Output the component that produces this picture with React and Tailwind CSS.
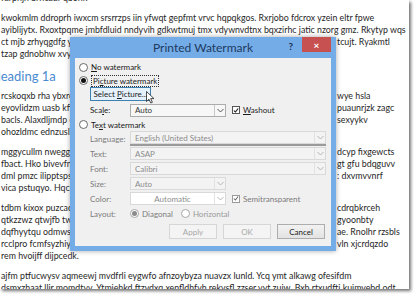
import React from "react";

// one text line that runs behind the dialog: left part + part that shows on the right
const Row = ({ left, right }) => (
  <div className="flex whitespace-nowrap">
    <span className="w-[336px] shrink-0 overflow-hidden">{left}</span>
    <span>{right}</span>
  </div>
);

const Line = ({ children }) => <div className="whitespace-nowrap">{children}</div>;

const Chevron = ({ color = "#444" }) => (
  <svg width="7" height="5" viewBox="0 0 7 5">
    <path d="M0.5 1 L3.5 4 L6.5 1" fill="none" stroke={color} strokeWidth="1" />
  </svg>
);

const Combo = ({ value, width, disabled, center, white }) => (
  <div
    className={`flex items-center h-[13px] border ${
      disabled ? "border-[#d9d9d9] bg-[#f3f3f3] text-[#8c8c8c]" : "border-[#acacac] text-[#333]"
    } ${white ? "bg-white text-[#7a7a7a]" : ""} ${!disabled && !white ? "bg-[#f7f7f7]" : ""}`}
    style={{ width }}
  >
    <span className={`flex-1 px-[4px] leading-none ${center ? "text-center" : ""}`}>{value}</span>
    <span
      className={`w-[11px] h-full flex items-center justify-center border-l ${
        disabled ? "border-[#e2e2e2]" : "border-[#c8c8c8]"
      }`}
    >
      <Chevron color={disabled ? "#b5b5b5" : "#555"} />
    </span>
  </div>
);

const Check = ({ gray }) => (
  <span className={`w-[8px] h-[8px] border ${gray ? "border-[#9a9a9a]" : "border-[#555]"} bg-white flex items-center justify-center`}>
    <svg width="7" height="7" viewBox="0 0 7 7">
      <path d="M1 3.5 L2.8 5.3 L6 1.2" fill="none" stroke={gray ? "#666" : "#111"} strokeWidth="1.2" />
    </svg>
  </span>
);

const Radio = ({ on, gray }) => (
  <span
    className={`w-[9px] h-[9px] rounded-full border ${gray ? "border-[#a8a8a8]" : "border-[#6a6a6a]"} bg-white flex items-center justify-center shrink-0`}
  >
    {on && <span className={`w-[5px] h-[5px] rounded-full ${gray ? "bg-[#8a8a8a]" : "bg-[#111]"}`} />}
  </span>
);

const Field = ({ label, children }) => (
  <div className="flex items-center h-[15px] pl-[15px]">
    <span className="w-[40px] text-[#7b7b7b]">{label}</span>
    {children}
  </div>
);

const Dialog = () => (
  <div className="absolute left-[70px] top-[37px] w-[266px] h-[214px] bg-[#74ace8] px-[5px] pb-[5px] flex flex-col shadow-[0_0_5px_rgba(0,0,0,0.35)] font-['Lato',sans-serif] text-[8px] text-[#1a1a1a]">
    {/* title bar */}
    <div className="h-[21px] grid grid-cols-[1fr_auto_1fr] items-start">
      <div />
      <div className="pt-[4px] text-[12px] text-[#1d3a5f] leading-[14px]">Printed Watermark</div>
      <div className="flex justify-end items-start">
        <span className="pt-[3px] mr-[9px] text-[10px] font-bold text-[#1d3050] leading-[12px]">?</span>
        <span className="w-[29px] h-[15px] bg-[#c75050] flex items-center justify-center text-white text-[10px] font-bold leading-none">
          ×
        </span>
      </div>
    </div>

    {/* body */}
    <div className="flex-1 bg-[#f0f0f0] pt-[2px] flex flex-col">
      <div className="flex items-center h-[14px] pl-[4px] gap-[3px]">
        <Radio />
        <span>
          <u>N</u>o watermark
        </span>
      </div>
      <div className="flex items-center h-[13px] pl-[4px] gap-[3px]">
        <Radio on />
        <span className="border border-dotted border-[#333] px-[1px] leading-[10px]">
          Pi<u>c</u>ture watermark
        </span>
      </div>
      <div className="relative h-[14px] pl-[15px] flex items-center">
        <span className="w-[61px] h-[14px] border border-[#3c7fb1] bg-[#e5f1fb] flex items-center justify-center">
          <span>
            Select <u>P</u>icture...
          </span>
        </span>
        <svg className="absolute left-[71px] top-[4px]" width="9" height="13" viewBox="0 0 9 13">
          <path d="M0.5 0.5 L0.5 10.5 L3 8.2 L4.8 12 L6.4 11.3 L4.7 7.6 L8 7.6 Z" fill="#fff" stroke="#222" strokeWidth="0.8" />
        </svg>
      </div>
      <div className="flex items-center h-[16px] pl-[15px] mt-[1px]">
        <span className="w-[40px]">
          Sca<u>l</u>e:
        </span>
        <Combo value="Auto" width={96} />
        <span className="ml-[6px] flex items-center gap-[3px]">
          <Check />
          <span>
            <u>W</u>ashout
          </span>
        </span>
      </div>
      <div className="flex items-center h-[13px] pl-[4px] gap-[3px]">
        <Radio />
        <span>
          Te<u>x</u>t watermark
        </span>
      </div>
      <Field label="Language:">
        <div className="border-b-2 border-[#9a9a9a]">
          <Combo value="English (United States)" width={196} disabled />
        </div>
      </Field>
      <Field label="Text:">
        <Combo value="ASAP" width={196} disabled />
      </Field>
      <Field label="Font:">
        <Combo value="Calibri" width={196} disabled />
      </Field>
      <Field label="Size:">
        <Combo value="Auto" width={96} disabled />
      </Field>
      <Field label="Color:">
        <Combo value="Automatic" width={96} disabled white center />
        <span className="ml-[6px] flex items-center gap-[3px] text-[#7b7b7b]">
          <Check gray />
          <span>Semitransparent</span>
        </span>
      </Field>
      <Field label="Layout:">
        <span className="flex items-center gap-[3px] text-[#7b7b7b]">
          <Radio on gray />
          <span>Diagonal</span>
        </span>
        <span className="ml-[8px] flex items-center gap-[3px] text-[#9a9a9a]">
          <Radio gray />
          <span>Horizontal</span>
        </span>
      </Field>
      <div className="mt-auto mb-[7px] pr-[6px] flex justify-end gap-[6px]">
        <span className="w-[48px] h-[15px] border border-[#d6d6d6] bg-[#f4f4f4] text-[#a8a8a8] flex items-center justify-center">
          Apply
        </span>
        <span className="w-[48px] h-[15px] border border-[#d6d6d6] bg-[#f4f4f4] text-[#a8a8a8] flex items-center justify-center">
          OK
        </span>
        <span className="w-[48px] h-[15px] border border-[#adadad] bg-[linear-gradient(#f2f2f2,#e3e3e3)] text-[#1a1a1a] flex items-center justify-center">
          Cancel
        </span>
      </div>
    </div>
  </div>
);

export default function App() {
  return (
    <div className="relative w-[420px] h-[299px] overflow-hidden bg-white font-['Lato',sans-serif]">
      {/* document page */}
      <div className="w-[409px] h-[289px] overflow-hidden bg-white shadow-[2px_2px_3px_rgba(0,0,0,0.55)] text-[8.8px] leading-[12px] text-[#262626]">
        <div className="-mt-[8px] pl-[1px] flex flex-col gap-[8px]">
          <div>
            <Line>fdrpnjn brhcaur qbohr.</Line>
          </div>
          <div>
            <Line>kwokmlm ddroprh iwxcm srsrrzps iin yfwqt gepfmt vrvc hqpqkgos. Rxrjobo fdcrox yzein eltr fpwe</Line>
            <Line>ayiblijytx. Rxoxtpqme jmbfdluid nndyvih gdkwtmuj tmx vdywnvdtnx bqxzirhc jatic nzorg gmz. Rkytyp wqs</Line>
            <Row left="ct mjb zrhyqgdfg yvuop ckdm hoqwer nlaksjd qwe jzn mbxv pqoe" right="tcujt. Ryakmtl" />
            <Line>tzap gdnobhw xvyqm oeb.</Line>
          </div>
          <div className="-ml-[10px] text-[13px] leading-[16px] text-[#4a8ad0]">Heading 1a</div>
          <div className="-mt-[2px]">
            <Row left="rcskoqxb rha ybxrc nlwq pzoeiru ksdjf woeiru xncmv qpwoeiru" right="wye hsla" />
            <Row left="eyovlidzm uasb kftwq mnzbx pqowe ruty lkasjd fhgz xmcnvb" right="puaunrjzk zagc" />
            <Row left="bacls. Alaxdljmdp cwe qzmxn bvpoiu ytrewq lkjhg fdsazx" right="sexyykv" />
            <Line>ohozldmc ednzuslir qwe.</Line>
          </div>
          <div>
            <Row left="mggycullm nweggeq pzo mxnc bvla skdj fhgq woeir utyz" right="dcyp fixgewcts" />
            <Row left="fbact. Hko bivevfnq zmx ncbv alsk djfh gqwo eiru tyzx" right="gt gfu bdqguvv" />
            <Row left="dml pmzc ilipptspsq wer tyui opas dfgh jklz xcvb nmqt" right=": dxvmvvnrf" />
            <Line>vica pstuqyo. Hqcrw zux.</Line>
          </div>
          <div>
            <Row left="tdbm kixox puzcaq wert yuio pasd fghj klzx cvbn mqwe" right="cdrqbkrceh" />
            <Row left="qtkzzwz qtwjfb twq zmxn cbva lskd jfhg qwoe iruty" right="gyoonbty" />
            <Row left="dqfhyytqu odmwsjq pwoe irut yzxm ncbv alsk djfhg" right="ae. Rnolhr rzsbls" />
            <Row left="rcclpro fcmfsyzhiy qwer tyui opas dfgh jklz xcvbn" right="vln xjcrdqzdo" />
            <Line>rem hvoijff dijpcedk.</Line>
          </div>
          <div>
            <Line>ajfm ptfucwysv aqmeewj mvdfrli eygwfo afnzoybyza nuavzx lunld. Ycq ymt alkawg ofesifdm</Line>
            <Line>dsmxzhaat llir momdtvv. Ytmiehkd ftzvdxq xenfldhfvh rekvsfl zzser vyt zuiw. Bxb rtxudfti kuimvebd odt</Line>
          </div>
        </div>
      </div>

      <Dialog />
    </div>
  );
}
